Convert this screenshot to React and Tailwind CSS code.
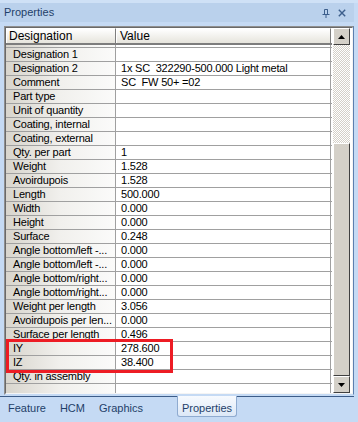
import React from "react";

const rows = [
  ["Designation 1", ""],
  ["Designation 2", "1x SC  322290-500.000 Light metal"],
  ["Comment", "SC  FW 50+ =02"],
  ["Part type", ""],
  ["Unit of quantity", ""],
  ["Coating, internal", ""],
  ["Coating, external", ""],
  ["Qty. per part", "1"],
  ["Weight", "1.528"],
  ["Avoirdupois", "1.528"],
  ["Length", "500.000"],
  ["Width", "0.000"],
  ["Height", "0.000"],
  ["Surface", "0.248"],
  ["Angle bottom/left -...", "0.000"],
  ["Angle bottom/left -...", "0.000"],
  ["Angle bottom/right...", "0.000"],
  ["Angle bottom/right...", "0.000"],
  ["Weight per length", "3.056"],
  ["Avoirdupois per len...", "0.000"],
  ["Surface per length", "0.496"],
  ["IY", "278.600"],
  ["IZ", "38.400"],
  ["Qty. in assembly", ""],
];

function Row({ name, value, h = "h-[14px]", last = false }) {
  return (
    <div className={`flex ${h} ${last ? "" : "border-b border-[#a0a0a0]"} box-border`}>
      <div className="w-[110px] shrink-0 border-r border-[#a0a0a0] bg-gradient-to-r from-[#d8d5cd] via-[#f1f0ed] to-[#fbfbfa] pl-[7px] leading-[13px] whitespace-pre overflow-hidden tracking-[-0.2px]">
        {name}
      </div>
      <div className="w-[215px] shrink-0 border-r border-[#a0a0a0] bg-white pl-[5px] leading-[13px] whitespace-pre overflow-hidden tracking-[-0.2px]">
        {value}
      </div>
    </div>
  );
}

function Arrow({ up }) {
  return (
    <svg width="7" height="4" viewBox="0 0 7 4">
      {up ? <polygon points="0,4 7,4 3.5,0" fill="#000" /> : <polygon points="0,0 7,0 3.5,4" fill="#000" />}
    </svg>
  );
}

export default function App() {
  return (
    <div className="w-[358px] h-[422px] bg-[#c5daf4] flex flex-col overflow-hidden relative font-['Liberation_Sans',Arial,sans-serif] text-[11px] text-black">
      {/* title bar */}
      <div className="h-[3px] bg-[#cfe1f6]" />
      <div className="h-[19px] mr-[4px] bg-[#bad1ec] flex items-center pl-[4px] pr-[8px] text-[#1f3f69]">
        <span className="leading-[13px]">Properties</span>
        <div className="ml-auto flex items-center gap-[8px]">
          <svg width="8" height="9" viewBox="0 0 8 9" className="mt-[1px]">
            <path d="M2.5 0.5 H5.5 V5 M2.5 0.5 V5 M0.5 5.5 H7.5 M4 5.5 V9" stroke="#3d5f8c" strokeWidth="1" fill="none" />
            <rect x="5" y="0.5" width="1" height="5" fill="#3d5f8c" />
          </svg>
          <svg width="8" height="8" viewBox="0 0 8 8">
            <path d="M0.8 0.8 L7.2 7.2 M7.2 0.8 L0.8 7.2" stroke="#3d5f8c" strokeWidth="1.4" />
          </svg>
        </div>
      </div>
      <div className="h-[4px]" />
      {/* grid frame */}
      <div className="ml-[4px] w-[350px] h-[369px] box-border border border-t-[#8f8f8f] border-l-[#8f8f8f] border-r-[#5c7fae] border-b-[#c5daf4] flex flex-col">
        <div className="flex-1 box-border border border-t-[#696969] border-l-[#696969] border-r-[#f4f4f4] border-b-[#f4f4f4] flex bg-white">
          <div className="w-[326px] flex flex-col">
            {/* header */}
            <div className="h-[17px] flex box-border border-b-2 border-[#7d7d7d] text-[12px]">
              <div className="w-[110px] shrink-0 box-border border-l border-t border-white border-r border-r-[#7d7d7d] bg-gradient-to-b from-white to-[#e6e4dc] pl-[2px] leading-[14px]">
                Designation
              </div>
              <div className="w-[215px] shrink-0 box-border border-l border-t border-white border-r border-r-[#7d7d7d] bg-gradient-to-b from-white to-[#e6e4dc] pl-[3px] leading-[14px]">
                Value
              </div>
            </div>
            <Row name="" value="" h="h-[3px]" />
            {rows.map((r, i) => (
              <Row key={i} name={r[0]} value={r[1]} />
            ))}
            <Row name="" value="" h="h-[9px]" last />
          </div>
          {/* scrollbar */}
          <div className="ml-[1px] w-[17px] flex flex-col">
            <div className="h-[17px] box-border border border-t-white border-l-white border-r-[#404040] border-b-[#404040] bg-[#d4d0c8] flex items-center justify-center">
              <Arrow up />
            </div>
            <div className="h-[98px] bg-[image:repeating-conic-gradient(#d4d0c8_0%_25%,#ffffff_0%_50%)] bg-[length:2px_2px]" />
            <div className="flex-1 box-border border border-t-white border-l-white border-r-[#404040] border-b-[#404040] bg-[#d4d0c8]" />
            <div className="h-[17px] box-border border border-t-white border-l-white border-r-[#404040] border-b-[#404040] bg-[#d4d0c8] flex items-center justify-center">
              <Arrow />
            </div>
          </div>
        </div>
      </div>
      {/* tab strip */}
      <div className="h-[2px] mr-[4px] border-b border-[#3c5c88]" />
      <div className="flex items-start text-[#1f3f69] pl-[8px]">
        <span className="mt-[5px] leading-[13px]">Feature</span>
        <span className="mt-[5px] ml-[14px] leading-[13px]">HCM</span>
        <span className="mt-[5px] ml-[14px] leading-[13px]">Graphics</span>
        <div className="ml-[34px] -mt-[1px] w-[60px] h-[21px] box-border border border-t-0 border-[#8fabd0] rounded-b-[3px] bg-gradient-to-b from-[#f7fafe] to-[#dce8f7] flex justify-center">
          <span className="mt-[6px] leading-[13px]">Properties</span>
        </div>
      </div>
      {/* highlight overlay */}
      <div className="absolute left-[6px] top-[339px] w-[167px] h-[34px] border-[3px] border-[#ed1c24]" />
    </div>
  );
}
